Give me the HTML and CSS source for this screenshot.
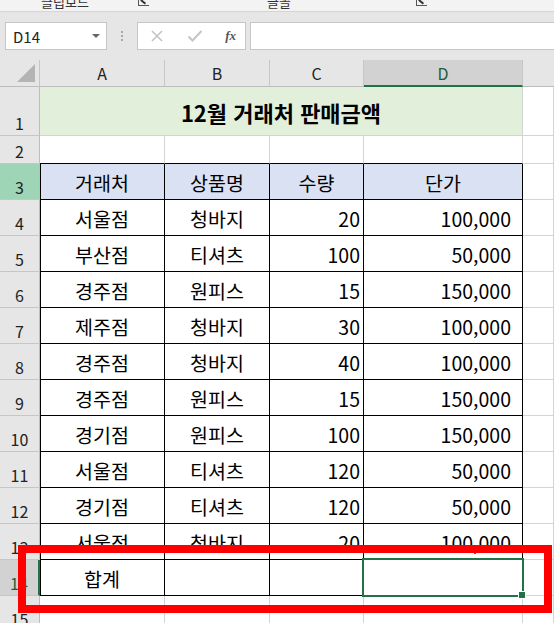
FILE: index.html
```html
<!DOCTYPE html>
<html lang="ko">
<head>
<meta charset="utf-8">
<link rel="stylesheet" href="styles.css">
</head>
<body>
<div class="app">
  <div class="ribbon">
    <span class="rlabel rl1">클립보드</span>
    <span class="launch l1"></span>
    <span class="rlabel rl2">글꼴</span>
    <span class="launch l2"></span>
  </div>
  <div class="fbar">
    <div class="namebox"><span>D14</span><span class="caret"></span></div>
    <div class="dots"><i></i><i></i><i></i></div>
    <div class="fxbox">
      <svg width="14" height="14" viewBox="0 0 14 14" class="ic"><path d="M2 2 L12 12 M12 2 L2 12" stroke="#c4c4c4" stroke-width="1.6" fill="none"/></svg>
      <svg width="16" height="14" viewBox="0 0 16 14" class="ic"><path d="M1.5 7.5 L5.5 11.5 L14.5 2" stroke="#c4c4c4" stroke-width="2" fill="none"/></svg>
      <span class="fx">fx</span>
    </div>
    <div class="finput"></div>
  </div>
  <div class="sheet">
    <div class="ch corner"><span class="tri"></span></div>
    <div class="ch">A</div><div class="ch">B</div><div class="ch">C</div><div class="ch sel">D</div><div class="ch blank"></div>

    <div class="rh">1</div>
    <div class="title">12월 거래처 판매금액</div>
    <div class="c"></div>

    <div class="rh">2</div>
    <div class="c tb"></div><div class="c tb"></div><div class="c tb"></div><div class="c tb"></div><div class="c"></div>

    <div class="rh hl">3</div>
    <div class="c t hd fa">거래처</div><div class="c t hd">상품명</div><div class="c t hd">수량</div><div class="c t hd">단가</div><div class="c"></div>

    <div class="rh">4</div>
    <div class="c t fa">서울점</div><div class="c t">청바지</div><div class="c t n">20</div><div class="c t n d">100,000</div><div class="c"></div>
    <div class="rh">5</div>
    <div class="c t fa">부산점</div><div class="c t">티셔츠</div><div class="c t n">100</div><div class="c t n d">50,000</div><div class="c"></div>
    <div class="rh">6</div>
    <div class="c t fa">경주점</div><div class="c t">원피스</div><div class="c t n">15</div><div class="c t n d">150,000</div><div class="c"></div>
    <div class="rh">7</div>
    <div class="c t fa">제주점</div><div class="c t">청바지</div><div class="c t n">30</div><div class="c t n d">100,000</div><div class="c"></div>
    <div class="rh">8</div>
    <div class="c t fa">경주점</div><div class="c t">청바지</div><div class="c t n">40</div><div class="c t n d">100,000</div><div class="c"></div>
    <div class="rh">9</div>
    <div class="c t fa">경주점</div><div class="c t">원피스</div><div class="c t n">15</div><div class="c t n d">150,000</div><div class="c"></div>
    <div class="rh">10</div>
    <div class="c t fa">경기점</div><div class="c t">원피스</div><div class="c t n">100</div><div class="c t n d">150,000</div><div class="c"></div>
    <div class="rh">11</div>
    <div class="c t fa">서울점</div><div class="c t">티셔츠</div><div class="c t n">120</div><div class="c t n d">50,000</div><div class="c"></div>
    <div class="rh">12</div>
    <div class="c t fa">경기점</div><div class="c t">티셔츠</div><div class="c t n">120</div><div class="c t n d">50,000</div><div class="c"></div>
    <div class="rh">13</div>
    <div class="c t fa">서울점</div><div class="c t">청바지</div><div class="c t n">20</div><div class="c t n d">100,000</div><div class="c"></div>
    <div class="rh rsel">14</div>
    <div class="c t fa">합계</div><div class="c t"></div><div class="c t"></div><div class="c t active"><span class="handle"></span></div><div class="c"></div>
    <div class="rh">15</div>
    <div class="c"></div><div class="c"></div><div class="c"></div><div class="c"></div><div class="c"></div>
  </div>
  <div class="redbox"></div>
</div>
</body>
</html>
```
FILE: styles.css
```css
* { box-sizing: border-box; }
html, body { margin: 0; padding: 0; }
body {
  width: 554px; height: 623px; overflow: hidden;
  font-family: "Noto Sans CJK KR", "Noto Sans", sans-serif;
  background: #fff; color: #000;
}
.app { position: relative; width: 554px; height: 623px; overflow: hidden; }

.ribbon {
  position: relative;
  height: 12px; background: #f3f3f3;
  border-bottom: 1px solid #d5d5d5;
  overflow: hidden;
}
.rlabel {
  position: absolute; top: -6px;
  font-size: 13px; line-height: 16px; color: #333;
}
.rl1 { left: 41px; }
.rl2 { left: 267px; }
.launch {
  position: absolute; top: -2px; width: 11px; height: 8px;
  border-left: 1px solid #555; border-bottom: 1px solid #555;
}
.launch::after {
  content: ""; position: absolute; left: 2px; top: 1px; width: 6px; height: 1.5px;
  background: #333; transform: rotate(40deg); transform-origin: left;
}
.l1 { left: 138px; }
.l2 { left: 416px; }

.fbar {
  height: 48px; background: #e6e6e6;
  display: flex; align-items: flex-start;
  padding: 10px 0 0 5px;
}
.namebox {
  width: 102px; height: 28px; background: #fff;
  border: 1px solid #c6c6c6;
  display: flex; align-items: center; justify-content: space-between;
  padding: 0 6px 0 7px;
  font-size: 15px; color: #222;
}
.caret {
  width: 0; height: 0;
  border-left: 4px solid transparent; border-right: 4px solid transparent;
  border-top: 4px solid #666;
}
.dots {
  width: 30px; height: 28px;
  display: flex; flex-direction: column; align-items: center; justify-content: center; gap: 2px;
}
.dots i { display: block; width: 2px; height: 2px; background: #a8a8a8; }
.fxbox {
  width: 109px; height: 28px; background: #fff;
  border: 1px solid #c6c6c6;
  display: flex; align-items: center; justify-content: space-between;
  padding: 0 9px 0 12px;
}
.fx {
  font-family: "Liberation Serif", "DejaVu Serif", serif;
  font-style: italic; font-size: 13px; color: #555; font-weight: bold;
}
.finput {
  margin-left: 4px; flex: 1; height: 28px; background: #fff;
  border: 1px solid #c6c6c6; border-right: none;
}

.sheet {
  display: grid;
  grid-template-columns: 40px 125px 105px 94px 159px 1fr;
  grid-template-rows: 27px 49px 28px repeat(13, 36px);
}
.ch {
  background: #e6e6e6;
  border-right: 1px solid #c6c6c6;
  border-bottom: 1px solid #bdbdbd;
  display: flex; align-items: center; justify-content: center;
  font-size: 16px; color: #222;
}
.ch.blank { border-right: none; }
.ch.sel { background: #d2d2d2; border-bottom: 2px solid #217346; color: #1e5c3a; }
.corner { position: relative; border-right: 1px solid #c6c6c6; }
.tri {
  position: absolute; right: 4px; bottom: 4px; width: 0; height: 0;
  border-left: 18px solid transparent; border-bottom: 18px solid #b4b4b4;
}
.rh {
  background: #e6e6e6;
  border-right: 1px solid #bdbdbd;
  border-bottom: 1px solid #c6c6c6;
  display: flex; align-items: flex-end; justify-content: center;
  padding-bottom: 2px;
  font-size: 16px; line-height: 20px; color: #222;
}
.rh.hl { background: #9fd5b7; }
.rh.rsel { background: #d2d2d2; border-right: 2px solid #217346; color: #1e5c3a; }

.title {
  grid-column: span 4;
  background: #e2efda;
  border-right: 1px solid #d4d4d4;
  border-bottom: 1px solid #d4d4d4;
  display: flex; align-items: center; justify-content: center;
  font-size: 22px; font-weight: bold; padding-top: 2px;
}
.c {
  border-right: 1px solid #d4d4d4;
  border-bottom: 1px solid #d4d4d4;
  display: flex; align-items: center; justify-content: center;
  font-size: 19.5px; padding-top: 1px;
}
.c.tb { border-bottom-color: #000; }
.c.t { border-right-color: #000; border-bottom-color: #000; }
.c.fa { box-shadow: inset 1px 0 0 #000; }
.c.hd { background: #d9e1f2; }
.c.n { justify-content: flex-end; padding-right: 3px; }
.c.n.d { padding-right: 11px; }
.c.active { position: relative; }
.c.active::before {
  content: ""; position: absolute; left: -2px; top: -2px; right: -2px; bottom: -2px;
  border: 2px solid #217346;
}
.handle {
  position: absolute; right: -4px; bottom: -4px; width: 6px; height: 6px;
  background: #217346; border: 1px solid #fff; box-sizing: content-box;
}

.redbox {
  position: absolute; left: 18px; top: 545px; width: 534px; height: 68px;
  border: 8px solid #ff0000;
}
```
